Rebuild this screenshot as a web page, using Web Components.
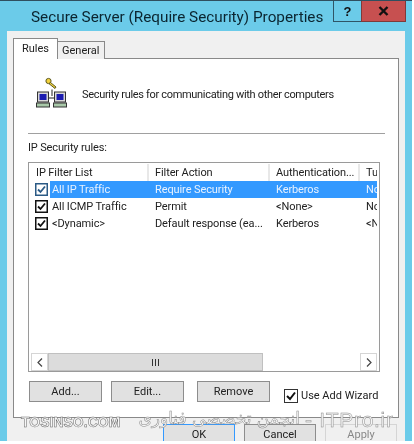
<!DOCTYPE html>
<html><head><meta charset="utf-8">
<style>
html,body{margin:0;padding:0;background:#fff;}
body{width:414px;height:444px;overflow:hidden;font-family:Roboto,"Noto Sans",sans-serif;}
</style></head><body>
<prop-dialog>
  <tab-strip slot="tabs"></tab-strip>
  <rules-page></rules-page>
</prop-dialog>
<script>
const UI='Roboto,"Noto Sans",sans-serif';
function def(name,html,setup){
  customElements.define(name,class extends HTMLElement{
    constructor(){super();this.attachShadow({mode:'open'}).innerHTML=html;}
    connectedCallback(){if(setup)setup(this);}
  });
}
def('prop-dialog',`<style>
:host{display:block;position:relative;width:412px;height:441px;background:#6bcbe9;border-top:1px solid #2f4f5f;box-sizing:border-box;overflow:hidden;filter:blur(.3px);}
.title{height:30px;display:flex;align-items:flex-start;}
.t{padding:6px 0 0 31px;font:15.3px/20px ${UI};color:#0b2530;white-space:nowrap;flex:1;min-width:0;}
.client{margin:0 7px;height:410px;background:#f0f0f0;box-sizing:border-box;padding:7px 7px 0 6px;}
</style>
<div class="title"><div class="t">Secure Server (Require Security) Properties</div><cap-buttons></cap-buttons></div>
<div class="client"><slot name="tabs"></slot><slot></slot></div>
<water-mark></water-mark>`);
def('cap-buttons',`<style>
:host{display:flex;margin-right:6px;height:21px;flex:none;}
div{display:flex;align-items:center;justify-content:center;box-sizing:border-box;font:bold 13px "Liberation Sans",sans-serif;color:#111;}
.h{width:28px;background:#6bcbe9;border:1px solid #2f5566;border-top:0;border-right:0;}
.c{width:45px;background:#c75050;border:1px solid #7f3a3a;border-top:0;}
svg{display:block}
</style><div class="h">?</div><div class="c"><svg width="11" height="10" viewBox="0 0 11 10"><path d="M1.5 1l8 8M9.5 1l-8 8" stroke="#111" stroke-width="2.4" fill="none"/></svg></div>`);
def('tab-strip',`<style>
:host{display:flex;align-items:flex-end;height:21px;font:11px ${UI};color:#222;position:relative;z-index:1;}
div{box-sizing:border-box;}
.a{width:45px;height:21px;background:#fff;border:1px solid #898989;border-bottom:0;padding:3px 0 0 8px;}
.b{width:47px;height:18px;background:#f0f0f0;border:1px solid #898989;border-left:0;border-bottom:0;padding:2px 0 0 4px;}
</style><div class="a">Rules</div><div class="b">General</div>`);
def('rules-page',`<style>
:host{display:block;width:386px;height:360px;margin-top:-1px;background:#fff;border:1px solid #898989;box-sizing:border-box;padding:19px 13px 0 14px;font:11px ${UI};color:#222;}
.top{display:flex;align-items:center;height:30px;padding-left:8px;gap:14px;}
.top span{padding-top:3px;letter-spacing:-.32px}
hr{border:0;border-top:1px solid #a0a0a0;margin:25px 0 0 0;height:0;}
.lbl{margin:6px 0 6px 0;line-height:16px;letter-spacing:-.15px}
.row{display:flex;margin-top:9px;margin-left:1px;height:21px;}
.row win-button:nth-child(2){margin-left:9px}
.row win-button:nth-child(3){margin-left:13px}
win-check{margin-left:14px}
</style>
<div class="top"><sec-icon></sec-icon><span>Security rules for communicating with other computers</span></div>
<hr>
<div class="lbl">IP Security rules:</div>
<rule-list></rule-list>
<div class="row"><win-button>Add...</win-button><win-button>Edit...</win-button><win-button>Remove</win-button><win-check>Use Add Wizard</win-check></div>`);
def('sec-icon',`<style>:host{display:block;width:32px;height:32px;}svg{display:block}</style>
<svg width="32" height="32" viewBox="0 0 32 32">
<path d="M16 19V12.5M9 21h15" stroke="#222" stroke-width="1" fill="none"/>
<g fill="#f3d23c" stroke="#5d5a20" stroke-width="1"><circle cx="12.5" cy="4" r="2.6"/><path d="M14.5 5.5l5.5 4.5-1 1.5-6-4.8z"/></g>
<rect x="1.5" y="15" width="11" height="10" fill="#d8d8d8" stroke="#333"/><rect x="3.5" y="17" width="7" height="6" fill="#1c1cb0"/><rect x="0.5" y="26" width="13" height="4" fill="#a8c8a8" stroke="#333"/>
<rect x="18.5" y="15" width="11" height="10" fill="#d8d8d8" stroke="#333"/><rect x="20.5" y="17" width="7" height="6" fill="#1c1cb0"/><rect x="17.5" y="26" width="13" height="4" fill="#a8c8a8" stroke="#333"/>
</svg>`);
def('rule-list',`<style>
:host{display:block;box-sizing:border-box;width:352px;height:210px;border:1px solid #9a9a9a;background:#fff;padding:1px 2px 0 2px;font:11px ${UI};color:#222;overflow:hidden;}
.body{height:189px;overflow:hidden;}
.g{display:grid;grid-template-columns:118px 121px 90px 17px;white-space:nowrap;height:17px;line-height:17px;overflow:hidden;letter-spacing:-.1px;}
.g>span{display:block;overflow:hidden;padding-left:6px;}
.g>span.c1{padding-left:4px;display:flex;align-items:center;gap:2px;}
.h>span{border-right:2px solid #e8e8e8;}
.h>span.f{padding-left:5px;}
.g.sel>span:not(.c1), .g.sel .n{background:#3399ff;color:#e8f2ff;}
.n{flex:1;padding-left:2px;height:17px;}
</style>
<div class="body">
<div class="g h"><span class="f">IP Filter List</span><span>Filter Action</span><span>Authentication...</span><span style="border:0">Tu</span></div>
<div class="g sel"><span class="c1"><mini-box sel></mini-box><span class="n">All IP Traffic</span></span><span>Require Security</span><span>Kerberos</span><span>No</span></div>
<div class="g"><span class="c1"><mini-box></mini-box><span class="n">All ICMP Traffic</span></span><span>Permit</span><span>&lt;None&gt;</span><span>No</span></div>
<div class="g"><span class="c1"><mini-box></mini-box><span class="n">&lt;Dynamic&gt;</span></span><span>Default response (ea...</span><span>Kerberos</span><span>&lt;N</span></div>
</div>
<h-scroll></h-scroll>`);
def('mini-box',`<style>
:host{display:block;width:13px;height:13px;flex:none;}
svg{display:block}
</style><svg width="13" height="13" viewBox="0 0 13 13"><rect x=".75" y=".75" width="11.5" height="11.5" fill="#fff" stroke="#111" stroke-width="1.5"/><path d="M3 6.5l2.5 2.5L10 3.5" fill="none" stroke="#111" stroke-width="1.8"/></svg>`,el=>{
 if(el.hasAttribute('sel')){el.shadowRoot.querySelector('rect').setAttribute('stroke','#2b5a85');el.shadowRoot.querySelector('path').setAttribute('stroke','#2b5a85');}
});
def('h-scroll',`<style>
:host{display:flex;height:18px;width:346px;background:#fff;box-sizing:border-box;}
.b{width:17px;display:flex;align-items:center;justify-content:center;border:1px solid #d5d5d5;box-sizing:border-box;flex:none;}
.t{width:215px;background:#dcdcdc;border:1px solid #c0c0c0;box-sizing:border-box;display:flex;align-items:center;justify-content:center;}
.s{flex:1;}
i{display:block;width:1px;height:7px;background:#333;margin:0 1px;}
svg{display:block}
</style>
<div class="b"><svg width="6" height="9" viewBox="0 0 6 9"><path d="M5 .5L1 4.5l4 4" fill="none" stroke="#444" stroke-width="1.2"/></svg></div>
<div class="t"><i></i><i></i><i></i></div><div class="s"></div>
<div class="b"><svg width="6" height="9" viewBox="0 0 6 9"><path d="M1 .5l4 4-4 4" fill="none" stroke="#444" stroke-width="1.2"/></svg></div>`);
def('win-button',`<style>
:host{display:flex;box-sizing:border-box;width:73px;height:21px;align-items:center;justify-content:center;background:#e1e1e1;border:1px solid #8d8d8d;font:11px ${UI};color:#222;}
</style><slot></slot>`);
def('win-check',`<style>
:host{display:flex;align-items:center;gap:3px;font:11px ${UI};color:#222;height:21px;margin-top:4px;white-space:nowrap;}
svg{display:block}
</style><svg width="14" height="14" viewBox="0 0 14 14"><rect x=".5" y=".5" width="13" height="13" fill="#fff" stroke="#333"/><path d="M3 7l3 3 5-6.5" fill="none" stroke="#111" stroke-width="2"/></svg><slot></slot>`);
def('water-mark',`<style>
:host{position:absolute;left:0;top:0;width:412px;height:440px;pointer-events:none;}
.btns{position:absolute;left:163px;top:423px;display:flex;gap:9px;}
.w{position:absolute;white-space:nowrap;color:#f6f6f6;-webkit-text-stroke:.5px #8a8a8a;}
.b{width:72px;height:20px;box-sizing:border-box;background:#e1e1e1;border:1px solid #8d8d8d;text-align:center;font:11px/20px ${UI};color:#222;}
.ok{border-color:#3399ff;}
.ap{background:#f0f0f0;border-color:#d5d5d5;color:#888;}
</style>
<div class="btns"><div class="b ok">OK</div><div class="b">Cancel</div><div class="b ap">Apply</div></div>
<div class="w" style="left:21px;top:413px;font:bold 14px 'Liberation Sans',sans-serif;-webkit-text-stroke-color:#666">TOSINSO.COM</div>
<div class="w" dir="rtl" style="left:128px;top:407px;width:172px;font:17px 'DejaVu Sans',sans-serif">انجمن تخصصی فناوری</div>
<div class="w" style="left:305px;top:407px;font:21px 'Liberation Sans',sans-serif;letter-spacing:.7px">- ITPro.ir</div>`);
</script>
</body></html>
